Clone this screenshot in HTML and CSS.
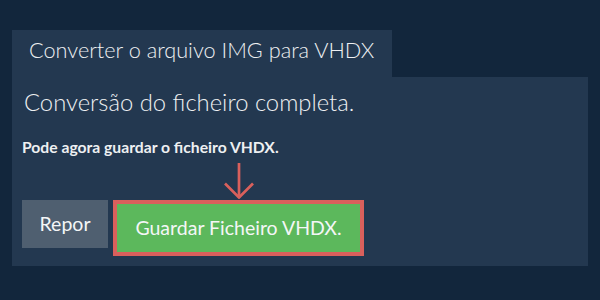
FILE: index.html
```html
<!DOCTYPE html>
<html lang="pt">
  <head>
    <meta charset="UTF-8" />
    <meta name="viewport" content="width=device-width, initial-scale=1.0" />
    <title>Converter IMG para VHDX</title>
    <link rel="stylesheet" href="styles.css">
  </head>

  <body>
    <div class="converter">
      <div class="converter_tab">Converter o arquivo IMG para VHDX</div>
      <div class="converter_panel">
        <h2 class="converter_title">Conversão do ficheiro completa.</h2>
        <p class="converter_note">Pode agora guardar o ficheiro VHDX.</p>
        <div class="converter_actions">
          <span></span>
          <svg class="save_arrow" viewBox="0 0 30 36">
            <line x1="15" y1="0" x2="15" y2="34.5" stroke="#d9605c" stroke-width="2.7" />
            <polyline points="1,20.5 15,34.5 29,20.5" fill="none" stroke="#d9605c" stroke-width="2.7" />
          </svg>
          <a class="btn btn_reset">Repor</a>
          <a class="btn btn_save">Guardar Ficheiro VHDX.</a>
        </div>
      </div>
    </div>
  </body>
</html>
```

FILE: styles.css
```css
html,
body {
  margin: 0;
  padding: 0;
}

body {
  background-color: #12263c;
  color: #eef0f2;
  font-family: Lato, "Open Sans", sans-serif;
}

.converter {
  padding: 30px 12px 0 12px;
}

.converter_tab {
  display: inline-block;
  box-sizing: border-box;
  width: 380px;
  height: 47px;
  padding: 6px 0 0 17px;
  background-color: #233850;
  font-size: 21.7px;
  font-weight: 300;
  line-height: 28px;
}

.converter_panel {
  background-color: #233850;
  padding: 11px 10px 10px 10px;
}

.converter_title {
  margin: 0 0 0 2px;
  font-size: 23.8px;
  font-weight: 300;
  line-height: 28px;
}

.converter_note {
  margin: 22px 0 0 0;
  font-size: 15.7px;
  font-weight: 700;
  line-height: 19px;
}

.converter_actions {
  display: grid;
  grid-template-columns: auto auto;
  justify-content: start;
  align-items: start;
  column-gap: 5px;
  row-gap: 1px;
  margin-top: 6px;
}

.save_arrow {
  display: block;
  justify-self: center;
  width: 30px;
  height: 36px;
}

.btn {
  display: flex;
  align-items: center;
  justify-content: center;
  box-sizing: border-box;
  font-size: 19.5px;
  line-height: 24px;
  color: #f4f6f7;
  cursor: pointer;
}

.btn_reset {
  width: 86px;
  height: 48px;
  background-color: #4f5f70;
}

.btn_save {
  width: 251px;
  height: 56px;
  background-color: #5cb85c;
  border: 4px solid #d9605c;
}
```
